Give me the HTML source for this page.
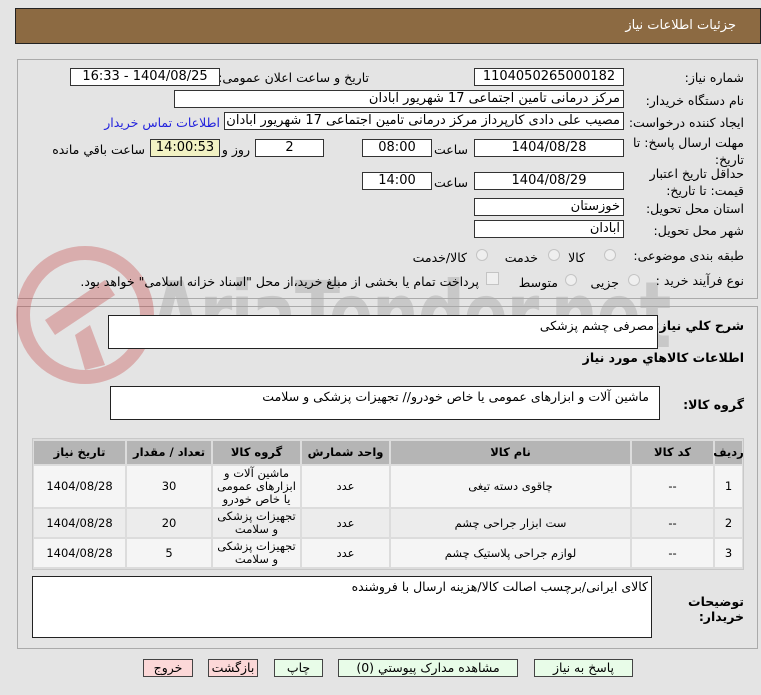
<!DOCTYPE html>
<html><head><meta charset="utf-8"><style>
*{box-sizing:border-box;margin:0;padding:0}
body{width:761px;height:695px;background:#e4e4e4;font-family:Tahoma,"DejaVu Sans","Liberation Sans",sans-serif;font-size:12px;color:#000;position:relative;overflow:hidden}
.a{position:absolute}
.hdr{left:15px;top:8px;width:746px;height:36px;background:#8c6a42;border:1px solid #222}
.hdr span{position:absolute;right:24px;top:9px;color:#fff;font-size:13px}
.pnl{border:1px solid #aaa}
.in{position:absolute;background:#fff;border:1px solid #333;height:18px;direction:rtl;text-align:center;line-height:16px;font-size:13px;white-space:nowrap;overflow:hidden}
.r{text-align:right;padding-right:3px}
.lb{position:absolute;direction:rtl;white-space:nowrap;font-size:12.5px}
.rad{position:absolute;width:12px;height:12px;border-radius:50%;border:1px solid #c4c4c4;background:#efefef}
.ta{position:absolute;background:#fff;border:1px solid #222;direction:rtl;padding:2px 3px;font-size:12.5px}
.c{position:absolute;display:flex;align-items:center;justify-content:center;text-align:center;direction:rtl;font-size:11.5px;line-height:13px;background:#f5f5f5}
.h{background:#b5b5b5;font-weight:bold;font-size:11.5px}
.btn{position:absolute;top:659px;height:18px;border:1px solid #444;text-align:center;line-height:16px;font-size:12.5px;background:#e8fce8}
.wm{position:absolute;left:150px;top:262px;font-family:"DejaVu Sans Condensed","Liberation Sans Narrow",sans-serif;font-size:92px;font-weight:bold;color:#a8a8a8;opacity:.45;letter-spacing:-2px;transform:scaleX(.8);transform-origin:left}
</style></head><body>
<div class="a hdr"><span>جزئیات اطلاعات نیاز</span></div>
<div class="a pnl" style="left:17px;top:59px;width:741px;height:240px"></div>
<div class="a pnl" style="left:17px;top:306px;width:741px;height:343px"></div>
<div class="wm">AriaTender.net</div>
<svg class="a" style="left:15px;top:240px;opacity:.3" width="140" height="150"><circle cx="70" cy="75" r="62" fill="none" stroke="#c03030" stroke-width="14"/><path d="M30 80 L90 40 L100 55 L40 95Z M60 95 L75 85 L90 125 L70 130Z" fill="#c03030"/></svg>

<div class="lb" style="right:17px;top:70px">شماره نیاز:</div>
<div class="in" style="left:474px;top:68px;width:150px">1104050265000182</div>
<div class="lb" style="right:392px;top:70px">تاریخ و ساعت اعلان عمومی:</div>
<div class="in" style="left:70px;top:68px;width:150px">1404/08/25 - 16:33</div>

<div class="lb" style="right:17px;top:93px">نام دستگاه خریدار:</div>
<div class="in r" style="left:174px;top:90px;width:450px">مرکز درمانی تامین اجتماعی 17 شهریور آبادان</div>

<div class="lb" style="right:17px;top:115px">ایجاد کننده درخواست:</div>
<div class="in r" style="left:224px;top:112px;width:400px">مصیب علی دادی کارپرداز مرکز درمانی تامین اجتماعی 17 شهریور آبادان</div>
<div class="lb" style="right:541px;top:115px;color:#2222dd">اطلاعات تماس خریدار</div>

<div class="lb" style="right:17px;top:134px;line-height:17px;text-align:right">مهلت ارسال پاسخ: تا<br>تاریخ:</div>
<div class="in" style="left:474px;top:139px;width:150px">1404/08/28</div>
<div class="lb" style="right:293px;top:142px">ساعت</div>
<div class="in" style="left:362px;top:139px;width:70px">08:00</div>
<div class="in" style="left:255px;top:139px;width:69px">2</div>
<div class="lb" style="right:511px;top:142px">روز و</div>
<div class="in" style="left:150px;top:139px;width:70px;background:#f2f2c4">14:00:53</div>
<div class="lb" style="right:616px;top:142px">ساعت باقي مانده</div>

<div class="lb" style="right:17px;top:165px;line-height:17px;text-align:right">حداقل تاریخ اعتبار<br>قیمت: تا تاریخ:</div>
<div class="in" style="left:474px;top:172px;width:150px">1404/08/29</div>
<div class="lb" style="right:293px;top:175px">ساعت</div>
<div class="in" style="left:362px;top:172px;width:70px">14:00</div>

<div class="lb" style="right:17px;top:201px">استان محل تحویل:</div>
<div class="in r" style="left:474px;top:198px;width:150px">خوزستان</div>
<div class="lb" style="right:17px;top:223px">شهر محل تحویل:</div>
<div class="in r" style="left:474px;top:220px;width:150px">آبادان</div>

<div class="lb" style="right:17px;top:248px">طبقه بندی موضوعی:</div>
<div class="rad" style="left:604px;top:249px"></div><div class="lb" style="right:176px;top:250px">کالا</div>
<div class="rad" style="left:548px;top:249px"></div><div class="lb" style="right:223px;top:250px">خدمت</div>
<div class="rad" style="left:476px;top:249px"></div><div class="lb" style="right:294px;top:250px">کالا/خدمت</div>

<div class="lb" style="right:17px;top:273px">نوع فرآیند خرید :</div>
<div class="rad" style="left:628px;top:274px"></div><div class="lb" style="right:142px;top:275px">جزیی</div>
<div class="rad" style="left:565px;top:274px"></div><div class="lb" style="right:203px;top:275px">متوسط</div>
<div class="a" style="left:486px;top:272px;width:13px;height:13px;border:1px solid #c4c4c4;background:#efefef"></div>
<div class="lb" style="right:282px;top:274px">پرداخت تمام یا بخشی از مبلغ خرید،از محل "اسناد خزانه اسلامی" خواهد بود.</div>

<div class="lb" style="right:17px;top:318px;font-weight:bold">شرح کلي نیاز:</div>
<div class="ta" style="left:108px;top:315px;width:550px;height:34px">مصرفی چشم پزشکی</div>
<div class="lb" style="right:17px;top:350px;font-weight:bold">اطلاعات کالاهاي مورد نیاز</div>
<div class="lb" style="right:17px;top:397px;font-weight:bold">گروه کالا:</div>
<div class="ta" style="left:110px;top:386px;width:550px;height:34px;padding-right:10px">ماشین آلات و ابزارهای عمومی یا خاص خودرو// تجهیزات پزشکی و سلامت</div>

<div class="a" style="left:32px;top:438px;width:712px;height:132px;background:#dcdcdc;border:1px solid #c8c8c8"></div>
<!-- header -->
<div class="c h" style="left:715px;top:441px;width:27px;height:23px">ردیف</div>
<div class="c h" style="left:632px;top:441px;width:81px;height:23px">کد کالا</div>
<div class="c h" style="left:391px;top:441px;width:239px;height:23px">نام کالا</div>
<div class="c h" style="left:302px;top:441px;width:87px;height:23px">واحد شمارش</div>
<div class="c h" style="left:213px;top:441px;width:87px;height:23px">گروه کالا</div>
<div class="c h" style="left:127px;top:441px;width:84px;height:23px">تعداد / مقدار</div>
<div class="c h" style="left:34px;top:441px;width:91px;height:23px">تاریخ نیاز</div>
<!-- row1 -->
<div class="c" style="left:715px;top:466px;width:27px;height:41px">1</div>
<div class="c" style="left:632px;top:466px;width:81px;height:41px">--</div>
<div class="c" style="left:391px;top:466px;width:239px;height:41px">چاقوی دسته تیغی</div>
<div class="c" style="left:302px;top:466px;width:87px;height:41px">عدد</div>
<div class="c" style="left:213px;top:466px;width:87px;height:41px">ماشین آلات و ابزارهای عمومی یا خاص خودرو</div>
<div class="c" style="left:127px;top:466px;width:84px;height:41px">30</div>
<div class="c" style="left:34px;top:466px;width:91px;height:41px">1404/08/28</div>
<!-- row2 -->
<div class="c" style="left:715px;top:509px;width:27px;height:28px;background:#ececec">2</div>
<div class="c" style="left:632px;top:509px;width:81px;height:28px;background:#ececec">--</div>
<div class="c" style="left:391px;top:509px;width:239px;height:28px;background:#ececec">ست ابزار جراحی چشم</div>
<div class="c" style="left:302px;top:509px;width:87px;height:28px;background:#ececec">عدد</div>
<div class="c" style="left:213px;top:509px;width:87px;height:28px;background:#ececec">تجهیزات پزشکی و سلامت</div>
<div class="c" style="left:127px;top:509px;width:84px;height:28px;background:#ececec">20</div>
<div class="c" style="left:34px;top:509px;width:91px;height:28px;background:#ececec">1404/08/28</div>
<!-- row3 -->
<div class="c" style="left:715px;top:539px;width:27px;height:28px">3</div>
<div class="c" style="left:632px;top:539px;width:81px;height:28px">--</div>
<div class="c" style="left:391px;top:539px;width:239px;height:28px">لوازم جراحی پلاستیک چشم</div>
<div class="c" style="left:302px;top:539px;width:87px;height:28px">عدد</div>
<div class="c" style="left:213px;top:539px;width:87px;height:28px">تجهیزات پزشکی و سلامت</div>
<div class="c" style="left:127px;top:539px;width:84px;height:28px">5</div>
<div class="c" style="left:34px;top:539px;width:91px;height:28px">1404/08/28</div>

<div class="lb" style="right:17px;top:594px;font-weight:bold;line-height:15px;text-align:right">توضیحات<br>خریدار:</div>
<div class="ta" style="left:32px;top:576px;width:620px;height:62px">کالای ایرانی/برچسب اصالت کالا/هزینه ارسال با فروشنده</div>

<div class="btn" style="left:534px;width:99px">پاسخ به نیاز</div>
<div class="btn" style="left:338px;width:180px">مشاهده مدارک پیوستي (0)</div>
<div class="btn" style="left:274px;width:49px">چاپ</div>
<div class="btn" style="left:208px;width:50px;background:#fcd8d8">بازگشت</div>
<div class="btn" style="left:143px;width:50px;background:#fcd8d8">خروج</div>
</body></html>
